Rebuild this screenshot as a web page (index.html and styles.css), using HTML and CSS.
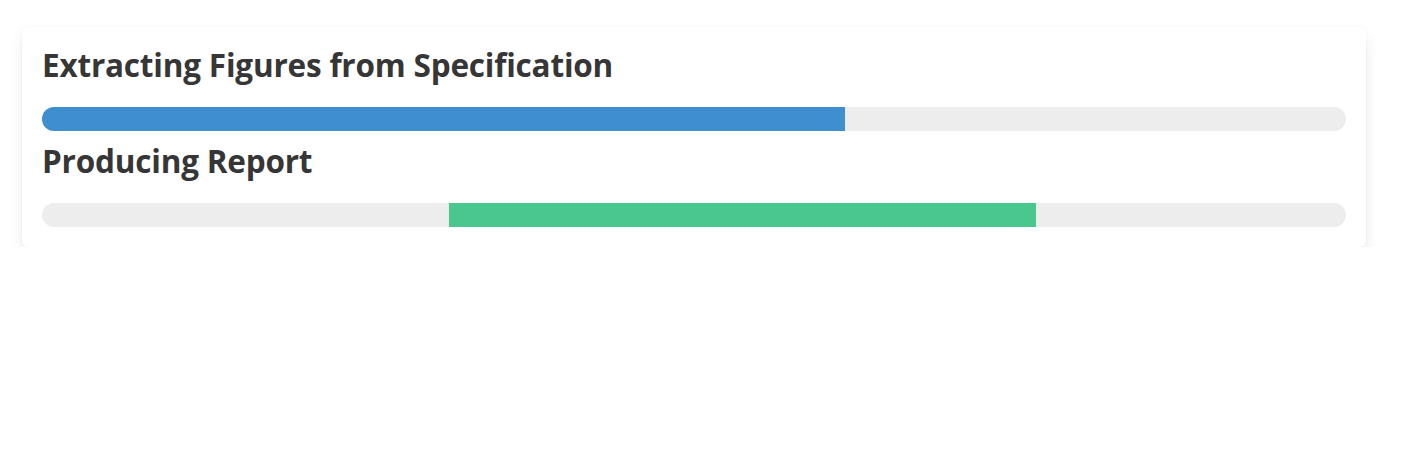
FILE: index.html
```html
<!DOCTYPE html>
<html>
<head>
<meta charset="utf-8">
<link rel="stylesheet" href="styles.css">
</head>
<body>
<div class="box">
  <h2 class="title">Extracting Figures from Specification</h2>
  <div class="track"><div class="fill fill-info" style="width:61.6%"></div></div>
  <h2 class="title title-next">Producing Report</h2>
  <div class="track"><div class="fill fill-success" style="margin-left:31.2%;width:45%"></div></div>
</div>
</body>
</html>
```
FILE: styles.css
```css
html, body { margin: 0; padding: 0; background: #fff; }
body {
  padding: 27px 39px 0 22px;
  font-family: "Open Sans", "Noto Sans", sans-serif;
}
.box {
  background: #fff;
  border-radius: 6px;
  box-shadow: 0 8px 16px -2px rgba(10,10,10,0.1), 0 0 0 1px rgba(10,10,10,0.02);
  padding: 20px;
}
.title {
  margin: 0 0 24px 0;
  font-size: 31.5px;
  font-weight: 700;
  line-height: 36px;
  color: #363636;
  letter-spacing: -0.2px;
}
.title-next { margin-top: 12px; }
.track {
  display: flex;
  height: 24px;
  background: #ededed;
  border-radius: 12px;
  overflow: hidden;
}
.fill { height: 100%; }
.fill-info { background: #3e8ed0; }
.fill-success { background: #48c78e; }
```
